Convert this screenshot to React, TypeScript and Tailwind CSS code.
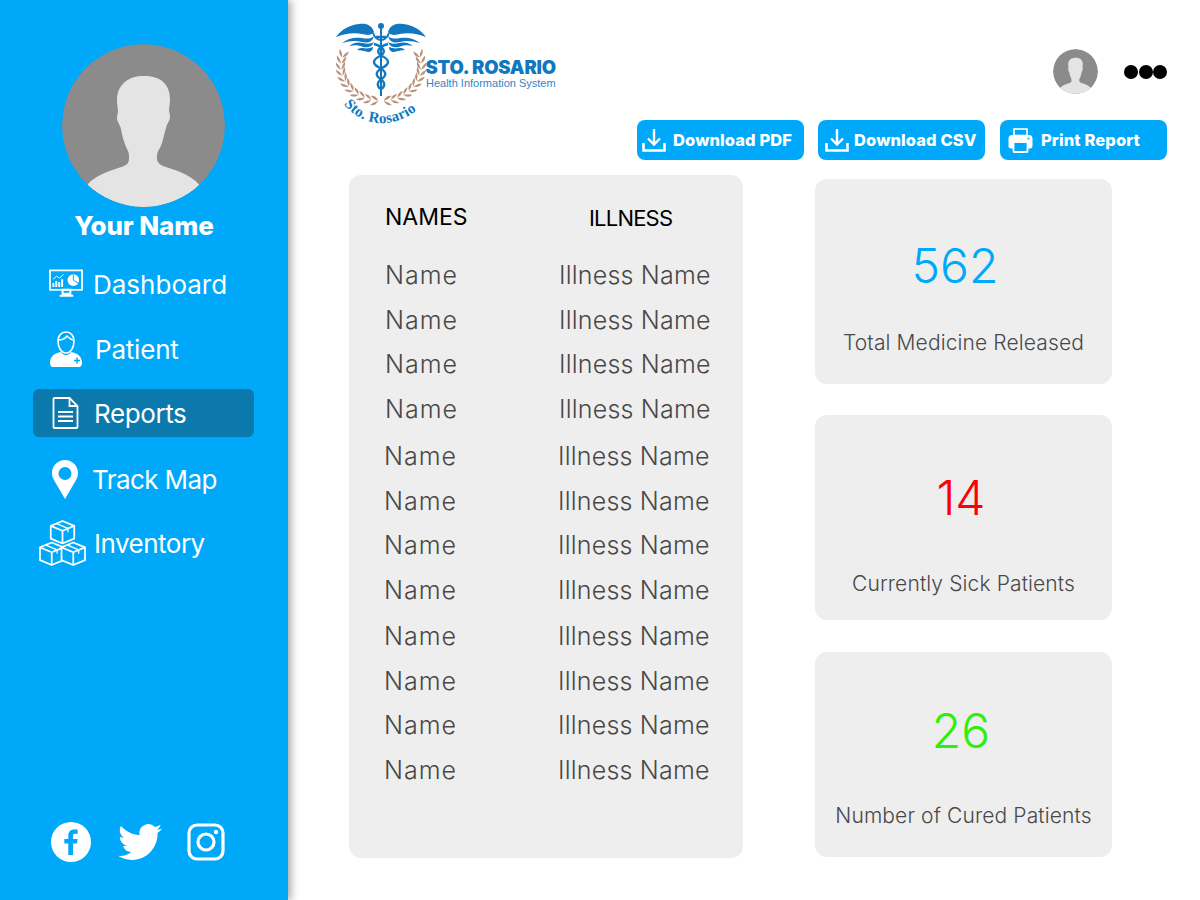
import React from 'react';

const fontClass = "font-['Inter','Liberation_Sans',sans-serif]";

const Silhouette = () => (
  <svg viewBox="0 0 163 163" className="w-full h-full">
    <defs>
      <clipPath id="avatarClip"><circle cx="81.5" cy="81.5" r="81.5" /></clipPath>
    </defs>
    <g clipPath="url(#avatarClip)">
      <rect width="163" height="163" fill="#8b8b8b" />
      <path
        d="M81 32c-16 0-26 10-26 24 0 5 1 9 1 11 0 2-1 4-1 7 0 4 3 6 4 11 1 6 3 14 6 20 2 3 2 6 2 9 0 4-1 6-5 8-10 4-30 8-39 22l27 30h70l20-30c-10-14-28-18-39-22-4-2-6-4-6-8 0-3 0-6 3-10 3-6 4-14 6-20 1-5 4-7 4-11 0-3-1-5-1-7 0-2 1-6 1-11 0-14-9-23-25-23z"
        fill="#e4e4e4"
      />
    </g>
  </svg>
);

const DashboardIcon = () => (
  <svg viewBox="0 0 36 30" className="w-[35px] h-[30px]" fill="none">
    <rect x="1" y="1" width="33" height="20" stroke="#fff" strokeWidth="1.8" />
    <path d="M14 21v4h8v-4zM11 27h14" stroke="#fff" strokeWidth="2" />
    <path d="M4.5 18v-4M7.5 18v-6M10.5 18v-5M13.5 18v-8" stroke="#fff" strokeWidth="2" />
    <path d="M4 10l4-3 3 2 4-4" stroke="#fff" strokeWidth="1" />
    <circle cx="25" cy="11" r="6" fill="#fff" />
    <path d="M25 11V5M25 11l5 3" stroke="#00a8f9" strokeWidth="1" />
  </svg>
);

const PatientIcon = () => (
  <svg viewBox="0 0 34 37" className="w-[34px] h-[37px]" fill="none">
    <path d="M9 10c0-5 3-9 8-9s8 4 8 9c0 6-3 12-8 12S9 16 9 10z" stroke="#fff" strokeWidth="1.6" />
    <path d="M9 9c3 0 7-1 9-4 2 2 4 4 7 4" stroke="#fff" strokeWidth="1.4" />
    <path d="M1 32c0-7 5-10 11-11 1 2 3 3 5 3s4-1 5-3c6 1 11 4 11 11 0 2-1 4-3 4H4c-2 0-3-2-3-4z" fill="#fff" />
    <path d="M25 29.500h6M28 26.500v6" stroke="#00a8f9" strokeWidth="1.500" />
  </svg>
);

const ReportsIcon = () => (
  <svg viewBox="0 0 27 32" className="w-[27px] h-[32px]" fill="none" stroke="#fff" strokeWidth="1.8">
    <path d="M2.500 1h15l8 8v21a1 1 0 0 1-1 1h-22a1 1 0 0 1-1-1V2a1 1 0 0 1 1-1z" />
    <path d="M17.500 1v8h8" />
    <path d="M6 15h15M6 19.500h15M6 24h15" strokeWidth="1.800" />
  </svg>
);

const PinIcon = () => (
  <svg viewBox="0 0 26 39" className="w-[26px] h-[39px]">
    <path
      fillRule="evenodd"
      d="M13 0C6 0 0 5.500 0 13c0 3 1 5.500 2.500 8L13 39l10.500-18C25 18.500 26 16 26 13 26 5.500 20 0 13 0zm0 7a6.500 6.500 0 1 1 0 13 6.500 6.500 0 0 1 0-13z"
      fill="#fff"
    />
  </svg>
);

const Box = ({ x, y }: { x: number; y: number }) => (
  <g transform={`translate(${x} ${y})`} stroke="#fff" strokeWidth="1.800" fill="#00a8f9" strokeLinejoin="round">
    <path d="M12 0l12 5v13l-12 5-12-5V5z" />
    <path d="M0 5l12 5 12-5M12 10v13" fill="none" />
    <path d="M5.500 2.500l12 5v4" fill="none" strokeWidth="1.300" />
  </g>
);

const InventoryIcon = () => (
  <svg viewBox="0 0 48 47" className="w-[47px] h-[46px]">
    <Box x={12} y={1} />
    <Box x={1} y={23} />
    <Box x={23} y={23} />
  </svg>
);

const FacebookIcon = () => (
  <svg viewBox="0 0 40 40" className="w-[40px] h-[40px]">
    <circle cx="20" cy="20" r="20" fill="#fff" />
    <path
      d="M22 33V21.500h4l.6-4.600H22V14c0-1.300.4-2.200 2.300-2.200h2.400V7.700c-.4-.1-1.800-.2-3.500-.2-3.500 0-5.900 2.100-5.900 6v3.400h-4v4.600h4V33z"
      fill="#00a8f9"
    />
  </svg>
);

const TwitterIcon = () => (
  <svg viewBox="0 0 24 24" className="w-[44px] h-[44px]" fill="#fff">
    <path d="M23.950 4.570a10 10 0 0 1-2.820.770 4.960 4.960 0 0 0 2.160-2.720c-.95.550-2 .950-3.130 1.180a4.920 4.920 0 0 0-8.380 4.480C7.690 8.100 4.070 6.130 1.640 3.160a4.820 4.820 0 0 0-.660 2.470c0 1.710.870 3.210 2.190 4.100a4.900 4.900 0 0 1-2.230-.620v.060a4.920 4.920 0 0 0 3.950 4.830 4.900 4.900 0 0 1-2.210.080 4.940 4.940 0 0 0 4.600 3.420A9.870 9.870 0 0 1 0 19.540a14 14 0 0 0 7.560 2.210c9.050 0 14-7.500 14-13.980 0-.210 0-.420-.020-.630a9.940 9.940 0 0 0 2.460-2.550z" />
  </svg>
);

const InstagramIcon = () => (
  <svg viewBox="0 0 38 38" className="w-[38px] h-[38px]" fill="none" stroke="#fff">
    <rect x="2" y="2" width="34" height="34" rx="8" strokeWidth="3.200" />
    <circle cx="19" cy="19" r="8" strokeWidth="3.200" />
    <circle cx="29" cy="9" r="2.200" fill="#fff" stroke="none" />
  </svg>
);

const DownloadIcon = () => (
  <svg viewBox="0 0 24 24" className="w-[24px] h-[24px]" fill="none" stroke="#fff" strokeWidth="2.400">
    <path d="M12 1v15M6 10.500l6 6 6-6" />
    <path d="M1.500 15v7.500h21V15" strokeWidth="2.600" />
  </svg>
);

const PrintIcon = () => (
  <svg viewBox="0 0 25 25" className="w-[25px] h-[25px]" fill="none" stroke="#fff">
    <rect x="6" y="1" width="13" height="6.500" strokeWidth="1.600" />
    <path d="M3.500 7.500h18a2.500 2.500 0 0 1 2.500 2.500v8.500a1.500 1.500 0 0 1-1.500 1.500H2.500A1.500 1.500 0 0 1 1 18.500V10a2.500 2.500 0 0 1 2.500-2.500z" fill="#fff" strokeWidth="1" />
    <rect x="5.500" y="14" width="14" height="10" rx="0.500" fill="#00a8f9" strokeWidth="1.800" />
    <circle cx="20.500" cy="10.500" r="1" fill="#00a8f9" stroke="none" />
  </svg>
);

const wingFeathers = [
  'M38 10C36 3 30 1 23 2 13 3 5 8 0 15c8-3 17-5 26-3 4 1 9 2 12-2z',
  'M38 14c-3 3-7 3-12 2-7-1-14 0-20 5 7-2 14-3 20-1 5 1 10 1 12-6z',
  'M38 20c-3 2-7 2-11 1-4-1-9-1-14 3 5-1 10-1 14 1 4 1 9 0 11-5z',
  'M37 25c-3 1-6 2-10 1-2 0-4 0-6 2 4 0 7 1 11 2 3 0 5-2 5-5z',
];

const Wing = ({ flip }: { flip?: boolean }) => (
  <g transform={flip ? 'matrix(-1 0 0 1 90 0)' : undefined} fill="#1178c0">
    {wingFeathers.map(d => <path key={d} d={d} />)}
  </g>
);

// leaves placed along the wreath arc, u in degrees from the top of the branch down to the stem
const leafSpots = [-14, -4, 6, 16, 26, 36, 46, 56, 66, 76, 86].map(u => {
  const a = (u * Math.PI) / 180;
  const dx = 40 * Math.sin(a);
  const dy = 35 * Math.cos(a);
  return {
    x: 45 - 40 * Math.cos(a),
    y: 44 + 35 * Math.sin(a),
    r: (Math.atan2(dx, -dy) * 180) / Math.PI,
  };
});

const Laurel = ({ flip }: { flip?: boolean }) => (
  <g transform={flip ? 'matrix(-1 0 0 1 90 0)' : undefined} fill="#b9927b">
    {leafSpots.map((s, i) => (
      <g key={i} transform={`translate(${s.x} ${s.y}) rotate(${s.r})`}>
        <path d="M0 0Q3.500 5 0 9Q-1.500 5 0 0z" transform="rotate(-30)" />
        <path d="M0 0Q1.500 5 0 9Q-3.500 5 0 0z" transform="rotate(30)" />
      </g>
    ))}
  </g>
);

const Logo = () => (
  <svg viewBox="0 0 221 104" className="w-[221px] h-[104px]">
    <Wing />
    <Wing flip />
    <Laurel />
    <Laurel flip />
    <g fill="none" stroke="#1178c0">
      <path d="M45 6v68" strokeWidth="2" />
      <path d="M37 11c2 5 5 7 8 7s6-2 8-7" strokeWidth="2" />
      <path d="M40 15h10" strokeWidth="2.500" />
      <path d="M52 22c-10 3-13 8-6 12 8 4 8 8 0 12-7 4-7 8 0 12 3 3 3 6 0 9" strokeWidth="2.400" />
      <path d="M38 22c10 3 13 8 6 12-8 4-8 8 0 12 7 4 7 8 0 12-3 3-3 6 0 9" strokeWidth="2.400" />
    </g>
    <circle cx="45" cy="4" r="3" fill="#1178c0" />
    <defs>
      <path id="logoArc" d="M8 82C24 104 58 110 86 84" />
    </defs>
    <text fontFamily="'Liberation Serif', serif" fontWeight="700" fontSize="15" letterSpacing="0.300" fill="#1178c0">
      <textPath href="#logoArc" startOffset="0">Sto. Rosario</textPath>
    </text>
    <text x="89.500" y="52" fontFamily="'Inter', sans-serif" fontWeight="900" fontSize="18.500" letterSpacing="-0.200" fill="#1178c0">
      STO. ROSARIO
    </text>
    <text x="90" y="65" fontFamily="'Liberation Sans', sans-serif" fontSize="11" fill="#2f86c6">
      Health Information System
    </text>
  </svg>
);

const navItems = [
  { label: 'Dashboard', icon: <DashboardIcon />, iconBox: 'w-[36px] ml-[15px]', text: 'ml-[9px]', row: 'h-[40px] mt-[19px]' },
  { label: 'Patient', icon: <PatientIcon />, iconBox: 'w-[36px] ml-[15px]', text: 'ml-[11px] tracking-[-0.2px]', row: 'h-[40px] mt-[25px]' },
  { label: 'Reports', icon: <ReportsIcon />, iconBox: 'w-[36px] ml-[14px]', text: 'ml-[11px] tracking-[-0.4px]', row: 'h-[48px] mt-[20px] bg-[#0c79ad] rounded-md' },
  { label: 'Track Map', icon: <PinIcon />, iconBox: 'w-[36px] ml-[14px]', text: 'ml-[9px] tracking-[-0.6px]', row: 'h-[40px] mt-[22px]' },
  { label: 'Inventory', icon: <InventoryIcon />, iconBox: 'w-[47px] ml-[6px]', text: 'ml-[8px] tracking-[-0.5px]', row: 'h-[46px] mt-[21px]' },
];

const rows = [
  { top: 'mt-[26px]', x: 'ml-[36px]' },
  { top: 'mt-[11px]', x: 'ml-[36px]' },
  { top: 'mt-[10px]', x: 'ml-[36px]' },
  { top: 'mt-[11px]', x: 'ml-[36px]' },
  { top: 'mt-[13px]', x: 'ml-[35px]' },
  { top: 'mt-[11px]', x: 'ml-[35px]' },
  { top: 'mt-[10px]', x: 'ml-[35px]' },
  { top: 'mt-[11px]', x: 'ml-[35px]' },
  { top: 'mt-[12px]', x: 'ml-[35px]' },
  { top: 'mt-[11px]', x: 'ml-[35px]' },
  { top: 'mt-[10px]', x: 'ml-[35px]' },
  { top: 'mt-[11px]', x: 'ml-[35px]' },
];

const stats = [
  { value: '562', label: 'Total Medicine Released', color: 'text-[#00a8f9]', box: '', valueBox: 'mt-[52px] mr-[17px]', labelBox: 'mt-[26px]' },
  { value: '14', label: 'Currently Sick Patients', color: 'text-[#fb0007]', box: 'mt-[31px]', valueBox: 'mt-[48px] mr-[5px]', labelBox: 'mt-[35px]' },
  { value: '26', label: 'Number of Cured Patients', color: 'text-[#2bf00a]', box: 'mt-[32px]', valueBox: 'mt-[44px] mr-[5px]', labelBox: 'mt-[34px]' },
];

const buttons = [
  { label: 'Download PDF', icon: <DownloadIcon />, box: 'pl-[5px]', text: 'ml-[7px]' },
  { label: 'Download CSV', icon: <DownloadIcon />, box: 'pl-[7px] ml-[14px]', text: 'ml-[5px]' },
  { label: 'Print Report', icon: <PrintIcon />, box: 'pl-[8px] ml-[15px]', text: 'ml-[8px]' },
];

export default function App() {
  return (
    <div className={`flex w-[1200px] h-[900px] overflow-hidden bg-white ${fontClass}`}>
      <aside className="w-[288px] h-full shrink-0 bg-[#00a8f9] shadow-[3px_0_8px_rgba(0,0,0,0.35)] flex flex-col z-10">
        <div className="w-[163px] h-[163px] mt-[44px] ml-[62px] rounded-full overflow-hidden">
          <Silhouette />
        </div>
        <div className="text-center text-white text-[26px] leading-[38px] font-extrabold tracking-[-0.1px]">Your Name</div>
        <nav className="ml-[33px] w-[221px]">
          {navItems.map(item => (
            <div key={item.label} className={`flex items-center ${item.row}`}>
              <div className={`flex items-center justify-center shrink-0 ${item.iconBox}`}>{item.icon}</div>
              <span className={`text-white text-[26px] ${item.text}`}>{item.label}</span>
            </div>
          ))}
        </nav>
        <div className="mt-auto mb-[36px] ml-[51px] flex items-center">
          <FacebookIcon />
          <div className="ml-[27px]"><TwitterIcon /></div>
          <div className="ml-[25px]"><InstagramIcon /></div>
        </div>
      </aside>

      <main className="flex-1 h-full flex flex-col">
        <header className="h-[120px] flex items-start pl-[48px] pr-[33px]">
          <div className="mt-[22px]"><Logo /></div>
          <div className="ml-auto mt-[49px] flex items-center">
            <div className="w-[45px] h-[45px] rounded-full overflow-hidden"><Silhouette /></div>
            <div className="ml-[26px] flex gap-[0.5px]">
              <span className="w-[14px] h-[14px] rounded-full bg-black" />
              <span className="w-[14px] h-[14px] rounded-full bg-black" />
              <span className="w-[14px] h-[14px] rounded-full bg-black" />
            </div>
          </div>
        </header>

        <div className="flex justify-end pr-[33px]">
          {buttons.map(b => (
            <div key={b.label} className={`h-[40px] w-[167px] rounded-lg bg-[#00a8f9] text-white flex items-center ${b.box}`}>
              {b.icon}
              <span className={`text-[16.5px] font-extrabold whitespace-nowrap tracking-[0.1px] ${b.text}`}>{b.label}</span>
            </div>
          ))}
        </div>

        <div className="flex items-start pl-[61px] mt-[15px]">
          <section className="w-[394px] h-[683px] bg-[#eeeeee] rounded-xl">
            <div className="flex pt-[28px] text-black text-[23px] leading-[28px]">
              <span className="ml-[36px] w-[204px]">NAMES</span>
              <span className="text-[22px] tracking-[-0.8px] mt-[1px]">ILLNESS</span>
            </div>
            {rows.map((r, i) => (
              <div key={i} className={`flex text-[#484848] text-[25px] font-light tracking-[0.2px] leading-[34px] ${r.top} ${r.x}`}>
                <span className="w-[174px] tracking-[1px]">Name</span>
                <span>Illness Name</span>
              </div>
            ))}
          </section>

          <div className="ml-[72px] w-[297px] mt-[4px]">
            {stats.map(s => (
              <div key={s.label} className={`bg-[#eeeeee] rounded-xl h-[205px] flex flex-col items-center ${s.box}`}>
                <div className={`text-[48px] font-light leading-[70px] ${s.color} ${s.valueBox}`}>{s.value}</div>
                <div className={`text-[21px] font-light tracking-[0.12px] leading-[32px] text-[#484848] whitespace-nowrap ${s.labelBox}`}>{s.label}</div>
              </div>
            ))}
          </div>
        </div>
      </main>
    </div>
  );
}
